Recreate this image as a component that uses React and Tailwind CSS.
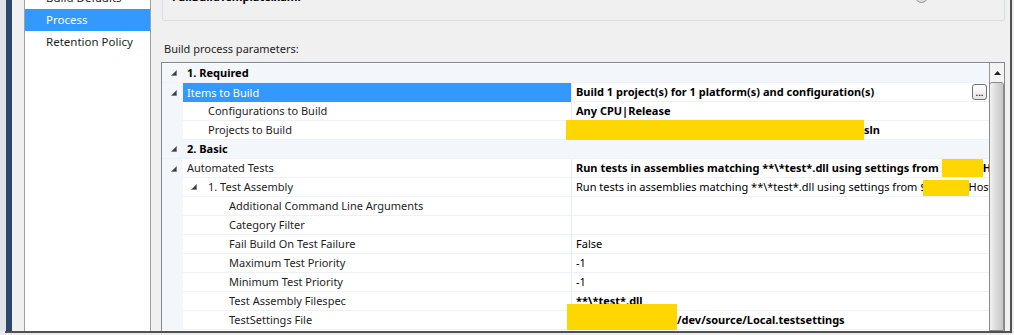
import React from 'react';

const font = "font-['Noto_Sans',sans-serif]";

const Redact = ({ className }) => <span className={`shrink-0 bg-[#ffd700] ${className}`} />;

const rows = [
  { cat: true, name: '1. Required' },
  { name: 'Items to Build', level: 0, arrow: true, selected: true, bold: true, button: true,
    value: 'Build 1 project(s) for 1 platform(s) and configuration(s)' },
  { name: 'Configurations to Build', level: 1, bold: true, value: 'Any CPU|Release' },
  { name: 'Projects to Build', level: 1, bold: true, value: 'sln', valuePad: 'pl-[292px]',
    redact: { left: 404, top: -1, w: 298, h: 20 } },
  { cat: true, name: '2. Basic' },
  { name: 'Automated Tests', level: 0, arrow: true, bold: true,
    value: (
      <>
        <span>Run tests in assemblies matching **\*test*.dll using settings from $</span>
        <Redact className="-ml-[6px] w-[41px] h-[18px]" />
        <span>Host</span>
      </>
    ) },
  { name: '1. Test Assembly', level: 1, arrow: true,
    value: (
      <>
        <span>Run tests in assemblies matching **\*test*.dll using settings from $</span>
        <Redact className="-ml-[4px] w-[46px] h-[17px] mt-[2px]" />
        <span>Host</span>
      </>
    ) },
  { name: 'Additional Command Line Arguments', level: 2, value: '' },
  { name: 'Category Filter', level: 2, value: '' },
  { name: 'Fail Build On Test Failure', level: 2, value: 'False' },
  { name: 'Maximum Test Priority', level: 2, value: '-1' },
  { name: 'Minimum Test Priority', level: 2, value: '-1' },
  { name: 'Test Assembly Filespec', level: 2, bold: true, value: '**\\*test*.dll' },
  { name: 'TestSettings File', level: 2, bold: true, value: '/dev/source/Local.testsettings',
    valuePad: 'pl-[105px]', redact: { left: 405, top: -7, w: 110, h: 26 } },
];

function Arrow() {
  return (
    <svg width="6" height="6" viewBox="0 0 6 6">
      <polygon points="5.5,0.5 5.5,5.5 0.5,5.5" fill="#3c3c3c" stroke="#7a7a7a" strokeWidth="0.8" strokeLinejoin="round" />
    </svg>
  );
}

const pads = ['pl-[4px]', 'pl-[25px]', 'pl-[46px]'];

function Row({ row }) {
  if (row.cat) {
    return (
      <div className="flex h-[19px] items-center bg-[#f3f6fb] border-b border-[#eef1f6]">
        <div className="w-[21px] flex justify-center pl-[2px]"><Arrow /></div>
        <div className="pl-[4px] font-bold text-black leading-[18px]">{row.name}</div>
      </div>
    );
  }
  return (
    <div className="relative flex h-[19px]">
      <div className="w-[21px] shrink-0 bg-[#f3f6fb] flex items-center justify-center pl-[2px]">
        {row.arrow && row.level === 0 && <Arrow />}
      </div>
      <div
        className={`w-[389px] shrink-0 flex items-center border-r border-[#e7ebf1] leading-[18px] whitespace-nowrap ${
          row.selected ? 'bg-[#3399ff] text-white' : 'border-b border-b-[#eef1f6]'
        } ${pads[row.level]} relative`}
      >
        {row.arrow && row.level === 1 && (
          <span className="absolute left-[8px] top-[6px]"><Arrow /></span>
        )}
        {row.name}
      </div>
      <div
        className={`w-[417px] shrink-0 flex items-start overflow-hidden whitespace-nowrap leading-[18px] border-b border-[#eef1f6] text-black ${
          row.bold ? 'font-bold' : ''
        } ${row.valuePad || 'pl-[4px]'}`}
      >
        {row.value}
      </div>
      {row.redact && (
        <div
          className="absolute z-10 bg-[#ffd700]"
          style={{ left: row.redact.left, top: row.redact.top, width: row.redact.w, height: row.redact.h }}
        />
      )}
      {row.button && (
        <div className="absolute left-[810px] top-[1px] w-[15px] h-[16px] rounded-[3px] border border-[#707070] bg-gradient-to-b from-white to-[#e6e6e6] flex items-end justify-center text-[10px] leading-[10px] font-normal text-black pb-[2px]">
          ...
        </div>
      )}
    </div>
  );
}

export default function App() {
  return (
    <div className={`w-[1014px] h-[335px] overflow-hidden bg-[#ececec] text-[11px] text-[#1e1e1e] ${font}`}>
      <div className="flex h-[331px]">
        <div className="w-[6px] bg-[#dfe3e8]" />
        <div className="w-[6px] bg-[#2d4669]" />
        <div className="w-[12px] bg-[#f0f0f0]" />
        <div className="w-[127px] bg-white border-x border-[#a0a0a0] flex flex-col text-[11.5px]">
          <div className="-mt-[13px] h-[22px] leading-[22px] pl-[21px]">Build Defaults</div>
          <div className="h-[22px] leading-[22px] pl-[21px] bg-[#3399ff] text-white">Process</div>
          <div className="h-[22px] leading-[22px] pl-[21px]">Retention Policy</div>
        </div>
        <div className="w-[10px] bg-[#f0f0f0]" />
        <div className="w-[844px] bg-[#f0f0f0] flex flex-col">
          <div className="ml-[1px] h-[21px] shrink-0 border-x border-b border-[#d5dfe5] rounded-b-[3px] flex justify-between">
            <div className="-mt-[10px] pl-[9px] font-bold text-black leading-[14px]">FullBuildTemplate.xaml</div>
            <div className="-mt-[10px] flex items-start gap-[5px] pr-[6px]">
              <div className="w-[13px] h-[13px] rounded-full border border-[#8e8f8f] bg-gradient-to-br from-[#f2f2f2] to-[#d4d4d4]" />
              <div className="leading-[14px] -mt-[2px]">Show details</div>
            </div>
          </div>
          <div className="mt-[20px] pl-[3px] leading-[16px] h-[16px]">Build process parameters:</div>
          <div className="mt-[5px] flex-1 flex border-t border-x border-[#828790] bg-white overflow-hidden">
            <div className="w-[827px] pt-[1px] bg-white">
              {rows.map((r, i) => (
                <Row key={i} row={r} />
              ))}
            </div>
            <div className="w-[15px] flex flex-col border-l border-[#9a9a9a] bg-[#f3f3f3]">
              <div className="h-[19px] shrink-0 flex items-center justify-center">
                <svg width="7" height="4" viewBox="0 0 7 4">
                  <polygon points="3.5,0 7,4 0,4" fill="#222" />
                </svg>
              </div>
              <div className="flex-1 -ml-[1px] rounded-t-[3px] border border-[#8a8a8a] bg-gradient-to-r from-[#f2f2f2] via-[#d9d9d9] to-[#c6c6c6]" />
            </div>
          </div>
        </div>
        <div className="w-[5px] bg-[#f0f0f0]" />
        <div className="w-[2px] bg-[#505050]" />
        <div className="flex-1 bg-[#ececec]" />
      </div>
      <div className="ml-[5px] w-[1007px] h-[2px] bg-[#505050]" />
    </div>
  );
}
